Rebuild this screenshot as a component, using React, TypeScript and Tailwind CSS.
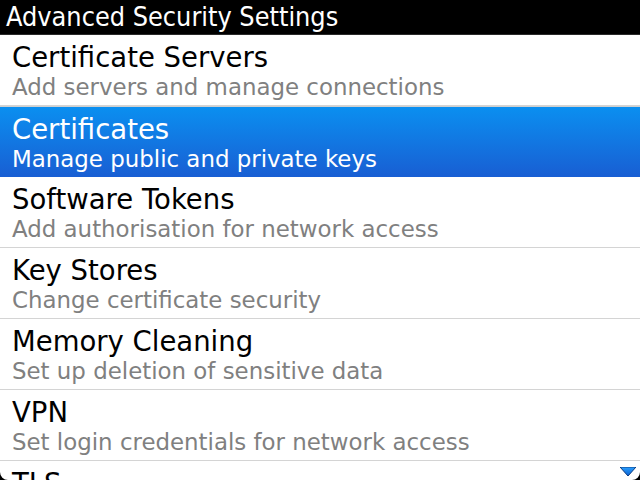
import React from "react";

const items = [
  ["Certificate Servers", "Add servers and manage connections"],
  ["Certificates", "Manage public and private keys"],
  ["Software Tokens", "Add authorisation for network access"],
  ["Key Stores", "Change certificate security"],
  ["Memory Cleaning", "Set up deletion of sensitive data"],
  ["VPN", "Set login credentials for network access"],
];

export default function App() {
  return (
    <div
      className="relative w-[640px] h-[480px] overflow-hidden bg-white"
      style={{ fontFamily: '"DejaVu Sans", sans-serif' }}
    >
      <div className="h-[34px] bg-black text-white text-[26.8px] leading-[34px] pl-[6px] border-b border-[#2a2a2a] box-content [font-stretch:condensed]" style={{ fontFamily: '"DejaVu Sans Condensed", "DejaVu Sans", sans-serif' }}>
        Advanced Security Settings
      </div>
      {items.map(([t, s], i) => {
        const sel = i === 1;
        return (
          <div
            key={t}
            className={
              sel
                ? "h-[71px] pl-[12px] bg-gradient-to-b from-[#0a8ff0] to-[#185ed3] border-t border-[#cfcfcf]"
                : "h-[71px] pl-[12px] border-b border-[#d4d4d4]"
            }
          >
            <div className={(sel ? "text-white" : "text-black") + " text-[27.5px] leading-[32px] pt-[6px]"}>{t}</div>
            <div className={(sel ? "text-white" : "text-[#808080]") + " text-[22.9px] leading-[29px]"}>{s}</div>
          </div>
        );
      })}
      <div className="h-[71px] pl-[12px]">
        <div className="text-black text-[27.5px] leading-[32px] pt-[6px]">TLS</div>
      </div>
      <svg className="absolute right-[4px] bottom-[3px]" width="16" height="10" viewBox="0 0 16 10">
        <defs>
          <linearGradient id="g" x1="0" y1="0" x2="0" y2="1">
            <stop offset="0" stopColor="#2aa0ff" />
            <stop offset="1" stopColor="#0a5fd0" />
          </linearGradient>
        </defs>
        <polygon points="0,0 16,0 8,9" fill="url(#g)" stroke="#0a3a80" strokeWidth="1" />
      </svg>
      <svg className="absolute left-0 bottom-0" width="8" height="8" viewBox="0 0 8 8">
        <path d="M0 0 A8 8 0 0 0 8 8 L0 8 Z" fill="black" />
      </svg>
      <svg className="absolute right-0 bottom-0" width="8" height="8" viewBox="0 0 8 8">
        <path d="M8 0 A8 8 0 0 1 0 8 L8 8 Z" fill="black" />
      </svg>
    </div>
  );
}
